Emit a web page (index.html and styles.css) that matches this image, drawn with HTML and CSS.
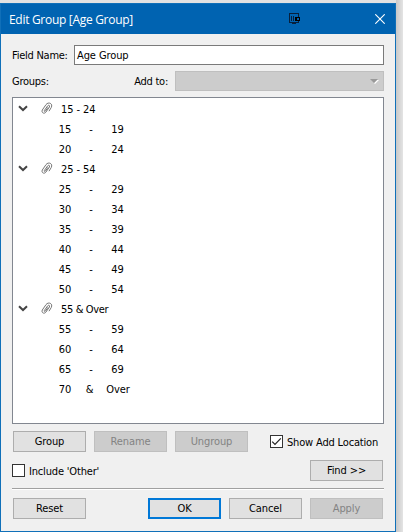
FILE: index.html
```html
<!DOCTYPE html>
<html lang="en">
<head>
<meta charset="utf-8">
<title>Edit Group [Age Group]</title>
<link rel="stylesheet" href="styles.css">
</head>
<body>
<svg class="defs" width="0" height="0">
  <symbol id="chevron" viewBox="0 0 10 7"><path d="M1 1.2L5 5L9 1.2" fill="none" stroke="#444" stroke-width="2"/></symbol>
  <symbol id="clip" viewBox="0 0 12 13"><path d="M3.3 8.6L6.6 3.9C7.6 2.5 9.3 3.5 8.4 5L5 10C3.5 12.3 0 11 1.3 8L5 2.6C7.4-.6 12.2 1.5 10.3 5.4L8 9.2M3.3 8.6C2.9 9.6 4 9.8 4.5 9L7 5.3" fill="none" stroke="#777" stroke-width="1"/></symbol>
</svg>
<main class="window">
  <header class="titlebar">
    <h1 class="title">Edit Group [Age Group]</h1>
    <svg class="pin" width="12" height="12" viewBox="0 0 12 12" shape-rendering="crispEdges">
      <path d="M.5.5h9v9h-9z" fill="none" stroke="#08203c"/>
      <path d="M2 3h1v5H2zM4 3h1v5H4z" fill="#08203c"/>
      <path d="M3 10h4v1H3z" fill="#08203c"/>
      <path d="M6 4h5v4H6z" fill="#000"/><path d="M8 5h2v2H8z" fill="#0063b1"/>
    </svg>
    <svg class="close" width="10" height="10" viewBox="0 0 10 10"><path d="M.3.3L9.7 9.7M9.7.3L.3 9.7" stroke="#fff" stroke-width="1.1"/></svg>
  </header>
  <div class="content">
    <div class="row field-row">
      <span class="label">Field Name:</span>
      <div class="input">Age Group</div>
    </div>
    <div class="row groups-row">
      <span class="label">Groups:</span>
      <span class="label add">Add to:</span>
      <div class="combo"><svg width="9" height="5" viewBox="0 0 9 5"><path d="M5 5L9 1H7L4 4z" fill="#fff"/><path d="M0 0h8L4 4z" fill="#999"/></svg></div>
    </div>
    <div class="tree">
      <div class="group"><svg class="chev"><use href="#chevron"/></svg><svg class="clip"><use href="#clip"/></svg><span>15 - 24</span></div>
      <div class="leaf"><span>15</span><span>-</span><span>19</span></div>
      <div class="leaf"><span>20</span><span>-</span><span>24</span></div>
      <div class="group"><svg class="chev"><use href="#chevron"/></svg><svg class="clip"><use href="#clip"/></svg><span>25 - 54</span></div>
      <div class="leaf"><span>25</span><span>-</span><span>29</span></div>
      <div class="leaf"><span>30</span><span>-</span><span>34</span></div>
      <div class="leaf"><span>35</span><span>-</span><span>39</span></div>
      <div class="leaf"><span>40</span><span>-</span><span>44</span></div>
      <div class="leaf"><span>45</span><span>-</span><span>49</span></div>
      <div class="leaf"><span>50</span><span>-</span><span>54</span></div>
      <div class="group"><svg class="chev"><use href="#chevron"/></svg><svg class="clip"><use href="#clip"/></svg><span class="tight">55 &amp; Over</span></div>
      <div class="leaf"><span>55</span><span>-</span><span>59</span></div>
      <div class="leaf"><span>60</span><span>-</span><span>64</span></div>
      <div class="leaf"><span>65</span><span>-</span><span>69</span></div>
      <div class="leaf open"><span>70</span><span>&amp;</span><span>Over</span></div>
    </div>
    <div class="row actions">
      <button class="btn">Group</button>
      <button class="btn" disabled>Rename</button>
      <button class="btn" disabled>Ungroup</button>
      <div class="check show"><span class="box"><svg width="11" height="11" viewBox="0 0 11 11"><path d="M1.2 5.6L4 8.4L9.8 2.4" fill="none" stroke="#222" stroke-width="1.2"/></svg></span><span class="text">Show Add Location</span></div>
    </div>
    <div class="row other">
      <div class="check"><span class="box"></span><span class="text">Include 'Other'</span></div>
      <button class="btn">Find &gt;&gt;</button>
    </div>
    <div class="rule"></div>
    <div class="row footer">
      <button class="btn reset">Reset</button>
      <button class="btn primary">OK</button>
      <button class="btn">Cancel</button>
      <button class="btn" disabled>Apply</button>
    </div>
  </div>
</main>
</body>
</html>
```
FILE: styles.css
```css
* { box-sizing: border-box; }
body {
  margin: 0;
  padding-top: 3px;
  height: 532px;
  overflow: hidden;
  background: linear-gradient(90deg, #e2e2e2 0 396px, #c8c8c8 396px, #e4e4e4 403px);
  font: 11px/14px "DejaVu Sans Condensed", "Noto Sans", sans-serif;
  font-stretch: condensed;
  letter-spacing: -0.1px;
  color: #000;
}
.defs { display: block; position: absolute; }
.window {
  width: 396px;
  height: 529px;
  border: 1px solid #1070b9;
  background: #f0f0f0;
}
.titlebar {
  display: flex;
  align-items: center;
  height: 30px;
  padding: 0 10px 0 8px;
  background: #0063b1;
  color: #fff;
}
.title {
  flex: 1;
  margin: 0;
  padding-top: 1px;
  font: 400 12px/16px "Open Sans", sans-serif;
  letter-spacing: -0.3px;
}
.pin { margin: 0 74px 0 0; }
.content { padding: 11px 11px 0; }
.row { display: flex; align-items: center; }
.label { white-space: nowrap; padding-top: 2px; letter-spacing: -0.25px; }
.field-row { height: 20px; }
.field-row .label { width: 62px; }
.input {
  flex: 1;
  height: 20px;
  padding: 3px 2px;
  border: 1px solid #7a7a7a;
  background: #fff;
}
.groups-row { height: 20px; margin-top: 6px; }
.groups-row .add { margin-left: auto; margin-right: 7px; }
.combo {
  display: flex;
  align-items: center;
  justify-content: flex-end;
  width: 209px;
  height: 20px;
  padding-right: 4px;
  border: 1px solid #bfbfbf;
  background: #ccc;
}
.tree {
  height: 327px;
  margin-top: 6px;
  padding-top: 1px;
  border: 1px solid #828790;
  background: #fff;
}
.group, .leaf { display: flex; align-items: center; height: 20px; white-space: nowrap; }
.group span, .leaf span { padding-top: 2px; }
.group .tight { letter-spacing: -0.35px; }
.chev { width: 10px; height: 7px; margin: -2px 13px 0 5px; }
.clip { width: 12px; height: 13px; margin: -2px 8px 0 0; }
.leaf { display: grid; grid-template-columns: 24px 28px 25px; padding-left: 40px; justify-items: center; }
.open { grid-template-columns: 24px 25px 32px; }
.btn {
  width: 73px;
  height: 21px;
  margin: 0;
  padding: 1px 0 0;
  border: 1px solid #adadad;
  background: #e1e1e1;
  color: #000;
  font: inherit;
  letter-spacing: inherit;
}
.btn:disabled { border-color: #bfbfbf; background: #ccc; color: #838383; }
.btn.primary { border: 2px solid #0078d7; }
.actions { gap: 8px; margin-top: 7px; padding-left: 1px; }
.check { display: flex; align-items: center; gap: 4px; white-space: nowrap; }
.check .text { padding-top: 2px; letter-spacing: -0.17px; }
.show { margin-left: 14px; }
.box { width: 13px; height: 13px; border: 1px solid #333; background: #fff; }
.box svg { display: block; }
.other { justify-content: space-between; margin-top: 8px; padding-right: 1px; }
.rule { height: 2px; margin-top: 7px; background: #a0a0a0; border-bottom: 1px solid #fff; }
.footer { gap: 8px; margin-top: 8px; padding: 0 1px; }
.reset { margin-right: auto; }
```
